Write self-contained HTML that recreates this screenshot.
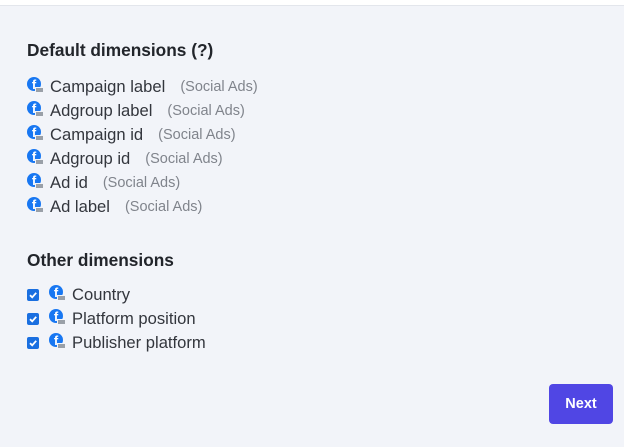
<!DOCTYPE html>
<html><head><style>
body{margin:0;width:624px;height:447px;background:#f2f4f9;font-family:"Liberation Sans",sans-serif;position:relative;overflow:hidden;color:#2a2d34}
.top{position:absolute;left:0;top:0;width:624px;height:5px;background:#fff;border-bottom:1px solid #e3e6ec}
h3{position:absolute;margin:0;font-size:17.3px;font-weight:bold;color:#22252b;left:27px}
.row{position:absolute;left:27px;height:20px;display:flex;align-items:center;font-size:16.6px;color:#33363d;white-space:nowrap}
.ic{position:relative;width:15px;height:15px;margin-right:8px;top:-3px}
.ic .c{position:absolute;left:0;top:0;width:14px;height:14px;border-radius:50%;background:#1877f2;color:#fff;font-weight:bold;font-size:13px;line-height:16px;text-align:center;font-family:"Liberation Sans",sans-serif}
.ic .b{position:absolute;left:8px;top:10px;width:7px;height:4px;background:#9aa0a8;border:1px solid #f2f4f9}
.s{color:#80848c;font-size:14.5px;margin-left:15px}
.cb{width:12px;height:12px;background:#1a6fe0;border-radius:2px;margin-right:10px;display:flex;align-items:center;justify-content:center}
.btn{position:absolute;left:549px;top:384px;width:64px;height:40px;background:#5046e4;border-radius:4px;color:#fff;font-weight:bold;font-size:14.5px;line-height:40px;text-align:center}
</style></head><body>
<div class="top"></div>
<h3 style="top:40px">Default dimensions (?)</h3>
<div class="row" style="top:77px"><div class="ic"><div class="c">f</div><div class="b"></div></div>Campaign label<span class="s">(Social Ads)</span></div>
<div class="row" style="top:101px"><div class="ic"><div class="c">f</div><div class="b"></div></div>Adgroup label<span class="s">(Social Ads)</span></div>
<div class="row" style="top:125px"><div class="ic"><div class="c">f</div><div class="b"></div></div>Campaign id<span class="s">(Social Ads)</span></div>
<div class="row" style="top:149px"><div class="ic"><div class="c">f</div><div class="b"></div></div>Adgroup id<span class="s">(Social Ads)</span></div>
<div class="row" style="top:173px"><div class="ic"><div class="c">f</div><div class="b"></div></div>Ad id<span class="s">(Social Ads)</span></div>
<div class="row" style="top:197px"><div class="ic"><div class="c">f</div><div class="b"></div></div>Ad label<span class="s">(Social Ads)</span></div>
<h3 style="top:250px">Other dimensions</h3>
<div class="row" style="top:285px"><div class="cb"><svg width="10" height="10" viewBox="0 0 10 10"><path d="M2 5.2 L4.2 7.3 L8.2 2.8" stroke="#fff" stroke-width="1.8" fill="none"/></svg></div><div class="ic"><div class="c">f</div><div class="b"></div></div>Country</div>
<div class="row" style="top:309px"><div class="cb"><svg width="10" height="10" viewBox="0 0 10 10"><path d="M2 5.2 L4.2 7.3 L8.2 2.8" stroke="#fff" stroke-width="1.8" fill="none"/></svg></div><div class="ic"><div class="c">f</div><div class="b"></div></div>Platform position</div>
<div class="row" style="top:333px"><div class="cb"><svg width="10" height="10" viewBox="0 0 10 10"><path d="M2 5.2 L4.2 7.3 L8.2 2.8" stroke="#fff" stroke-width="1.8" fill="none"/></svg></div><div class="ic"><div class="c">f</div><div class="b"></div></div>Publisher platform</div>
<div class="btn">Next</div>
</body></html>
